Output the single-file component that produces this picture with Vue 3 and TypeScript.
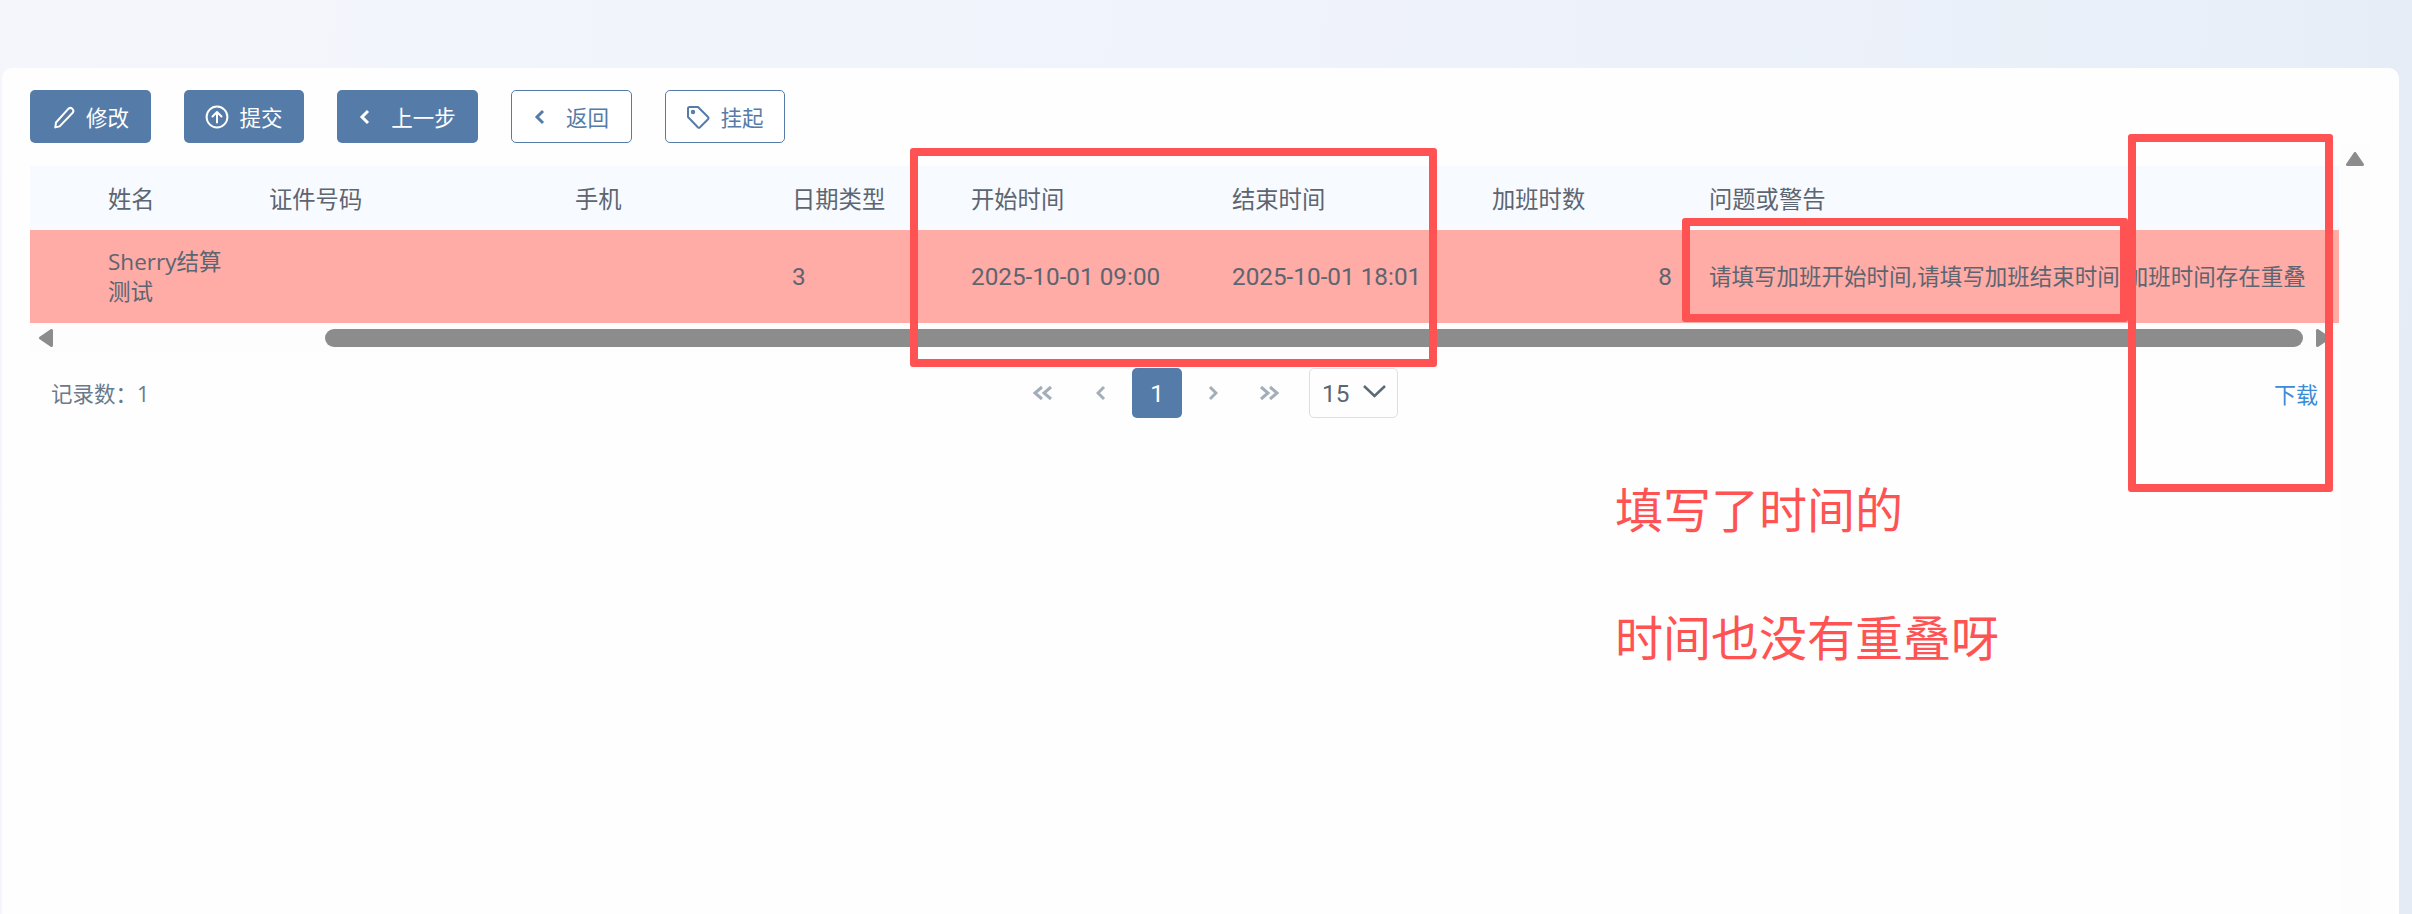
<script setup lang="ts">
interface Column {
  key: string
  title: string
  kind?: 'num' | 'right'
}

const columns: Column[] = [
  { key: 'blank', title: '' },
  { key: 'name', title: '姓名' },
  { key: 'idNo', title: '证件号码' },
  { key: 'phone', title: '手机' },
  { key: 'dateType', title: '日期类型', kind: 'num' },
  { key: 'start', title: '开始时间', kind: 'num' },
  { key: 'end', title: '结束时间', kind: 'num' },
  { key: 'hours', title: '加班时数', kind: 'right' },
  { key: 'issue', title: '问题或警告' },
]

const rows: Record<string, string>[] = [
  {
    blank: '',
    name: 'Sherry结算测试',
    idNo: '',
    phone: '',
    dateType: '3',
    start: '2025-10-01 09:00',
    end: '2025-10-01 18:01',
    hours: '8',
    issue: '请填写加班开始时间,请填写加班结束时间,加班时间存在重叠',
  },
]
</script>

<template>
  <div class="page">
    <main class="card">
      <div class="toolbar">
        <button class="btn solid w-edit">
          <svg class="icon" viewBox="0 0 24 24"><path d="M4 17.500 16.500 3.600a3 3 0 0 1 4.200 4.200L7.600 21.400l-4.300 1z" /></svg>
          修改
        </button>
        <button class="btn solid w-submit">
          <svg class="icon" viewBox="0 0 24 24"><circle cx="12" cy="12" r="10.400" /><path d="M12 17.500V7M7.500 11.500 12 7l4.500 4.500" /></svg>
          提交
        </button>
        <button class="btn solid w-prev">
          <svg class="chev" viewBox="0 0 12 18"><path d="M9 3 3 9l6 6" /></svg>
          上一步
        </button>
        <button class="btn outline w-back">
          <svg class="chev" viewBox="0 0 12 18"><path d="M9 3 3 9l6 6" /></svg>
          返回
        </button>
        <button class="btn outline w-hang">
          <svg class="icon tag" viewBox="0 0 24 24"><path d="M2 3.500A1.500 1.500 0 0 1 3.500 2H12l10 10a1.600 1.600 0 0 1 0 2.200l-8 8a1.600 1.600 0 0 1-2.200 0L2 12z" /><circle cx="7" cy="7" r="1.200" /></svg>
          挂起
        </button>
      </div>

      <div class="table">
        <div class="grid head">
          <div v-for="col in columns" :key="col.key" class="cell">{{ col.title }}</div>
        </div>
        <div v-for="(row, i) in rows" :key="i" class="grid row">
          <div
            v-for="col in columns"
            :key="col.key"
            class="cell"
            :class="[col.kind, 'c-' + col.key]"
          >{{ row[col.key] }}</div>
        </div>
        <div class="hscroll">
          <svg class="arrow-h" viewBox="0 0 14 18"><path d="M12.500 1.500v15L1.500 9z" /></svg>
          <span class="thumb"></span>
          <svg class="arrow-h arrow-next" viewBox="0 0 14 18"><path d="M1.500 1.500v15L12.500 9z" /></svg>
        </div>
      </div>

      <div class="footer">
        <span class="count">记录数：1</span>
        <div class="pager">
          <svg class="pg w-double" viewBox="0 0 22 16"><path d="M10 2 3 8l7 6M19 2l-7 6 7 6" /></svg>
          <svg class="pg w-single gap-a" viewBox="0 0 10 16"><path d="M8 2 2 8l6 6" /></svg>
          <span class="page-no">1</span>
          <svg class="pg w-single gap-b" viewBox="0 0 10 16"><path d="m2 2 6 6-6 6" /></svg>
          <svg class="pg w-double gap-c" viewBox="0 0 22 16"><path d="m3 2 7 6-7 6M12 2l7 6-7 6" /></svg>
          <div class="size">
            <span>15</span>
            <svg class="size-chev" viewBox="0 0 25 14"><path d="m2 2 10.500 10L23 2" /></svg>
          </div>
        </div>
        <a class="download">下载</a>
      </div>

      <div class="vscroll">
        <svg class="arrow-up" viewBox="0 0 18 14"><path d="M1.500 12.500h15L9 1.500z" /></svg>
      </div>
    </main>

    <!-- hand-drawn review annotations lying over the screenshot -->
    <div class="mark mark-a"></div>
    <div class="mark mark-b"></div>
    <div class="mark mark-c"></div>
    <div class="note note-a">填写了时间的</div>
    <div class="note note-b">时间也没有重叠呀</div>
  </div>
</template>

<style>
html,
body {
  margin: 0;
  background: #e4ebf4;
}
</style>

<style scoped>
.page {
  position: relative;
  height: 914px;
  overflow: hidden;
  padding: 68px 13px 0 2px;
  box-sizing: border-box;
  background: linear-gradient(95deg, #f4f6fb 0%, #f0f3fb 50%, #e8eff8 92%, #e4ebf4 100%);
  font-family: "Open Sans", "Noto Sans CJK SC", sans-serif;
  font-size: 22.500px;
  color: #5c6570;
}

.card {
  position: relative;
  height: 846px;
  padding: 22px 0 0 28px;
  box-sizing: border-box;
  background: #fefefe;
  border-radius: 10px 10px 0 0;
}

.toolbar {
  display: flex;
  gap: 33px;
  height: 53px;
}

.btn {
  display: flex;
  align-items: center;
  justify-content: center;
  gap: 10px;
  box-sizing: border-box;
  height: 53px;
  padding: 0;
  border-radius: 5px;
  font: inherit;
  font-size: 21.500px;
}

.solid {
  border: none;
  background: #557ca8;
  color: #fff;
}

.outline {
  border: 1.500px solid #557ca8;
  background: #fff;
  color: #557ca8;
}

.w-edit { width: 121px; }
.w-submit { width: 120px; }
.w-prev { width: 141px; gap: 20px; }
.w-back { width: 121px; gap: 20px; }
.w-hang { width: 120px; }

.icon {
  width: 24px;
  height: 24px;
  fill: none;
  stroke: currentColor;
  stroke-width: 2;
  stroke-linejoin: round;
  stroke-linecap: round;
}

.chev {
  width: 12px;
  height: 18px;
  fill: none;
  stroke: currentColor;
  stroke-width: 3;
}

.table {
  width: 2309px;
  margin-top: 23px;
}

.grid {
  display: grid;
  grid-template-columns: 63px 161px 306px 217px 179px 261px 260px 217px 645px;
  align-items: center;
}

.head {
  height: 64px;
  background: #f7fafe;
  font-size: 23.300px;
}

.row {
  height: 93px;
  background: #ffaba6;
  line-height: 30px;
}

.cell {
  padding: 0 15px;
}

.row .num,
.row .right,
.size span,
.page-no {
  font-family: Roboto, "Noto Sans CJK SC", sans-serif;
  font-size: 24.300px;
}

.row .right {
  padding-right: 22px;
  text-align: right;
}

.c-issue {
  white-space: nowrap;
}

.hscroll {
  display: flex;
  align-items: center;
  height: 30px;
  padding: 0 9px;
  background: #fdfdfd;
}

.thumb {
  width: 1978px;
  height: 18px;
  margin-left: 272px;
  border-radius: 9px;
  background: #8c8c8c;
}

.arrow-h,
.arrow-up {
  fill: #8c8c8c;
  stroke: #8c8c8c;
  stroke-width: 3;
  stroke-linejoin: round;
}

.arrow-h {
  width: 14px;
  height: 18px;
}

.arrow-next {
  margin-left: 13px;
}

.footer {
  position: relative;
  display: flex;
  align-items: center;
  width: 2309px;
  height: 50px;
  margin-top: 15px;
  font-size: 21.500px;
}

.count {
  margin-left: 21px;
  margin-bottom: 2px;
  color: #6a7a8b;
}

.pager {
  position: absolute;
  left: 1002px;
  top: 0;
  display: flex;
  align-items: center;
  height: 50px;
}

.pg {
  fill: none;
  stroke: #a4aeb9;
  stroke-width: 3;
}

.w-double { width: 22px; height: 16px; }
.w-single { width: 10px; height: 16px; }
.gap-a { margin-left: 42px; }
.gap-b { margin-left: 26px; }
.gap-c { margin-left: 40px; }

.page-no {
  display: flex;
  align-items: center;
  justify-content: center;
  width: 50px;
  height: 50px;
  margin-left: 26px;
  border-radius: 5px;
  background: #557ca8;
  color: #fff;
}

.size {
  display: flex;
  align-items: center;
  gap: 13px;
  box-sizing: border-box;
  width: 89px;
  height: 50px;
  margin-left: 29px;
  padding-left: 12px;
  border: 1px solid #dcdfe5;
  border-radius: 5px;
  color: #5c6570;
}

.size-chev {
  width: 25px;
  height: 14px;
  margin-top: -4px;
  fill: none;
  stroke: #5c6a78;
  stroke-width: 2.500;
}

.download {
  margin-left: auto;
  margin-right: 21px;
  font-size: 22px;
  color: #3b8bd8;
}

.vscroll {
  position: absolute;
  left: 2338px;
  top: 75px;
  bottom: 0;
  width: 30px;
  background: #fdfdfd;
}

.arrow-up {
  position: absolute;
  left: 6px;
  top: 9px;
  width: 18px;
  height: 14px;
}

.mark {
  position: absolute;
  box-sizing: border-box;
  border: 8px solid #ff5353;
  border-radius: 3px;
}

.mark-a { left: 910px; top: 148px; width: 527px; height: 219px; }
.mark-b { left: 1682px; top: 218px; width: 446px; height: 104px; }
.mark-c { left: 2128px; top: 134px; width: 205px; height: 358px; }

.note {
  position: absolute;
  font-size: 48px;
  font-weight: 400;
  line-height: 66px;
  white-space: nowrap;
  color: #ff5353;
}

.note-a { left: 1615px; top: 477px; }
.note-b { left: 1615px; top: 605px; }
</style>
